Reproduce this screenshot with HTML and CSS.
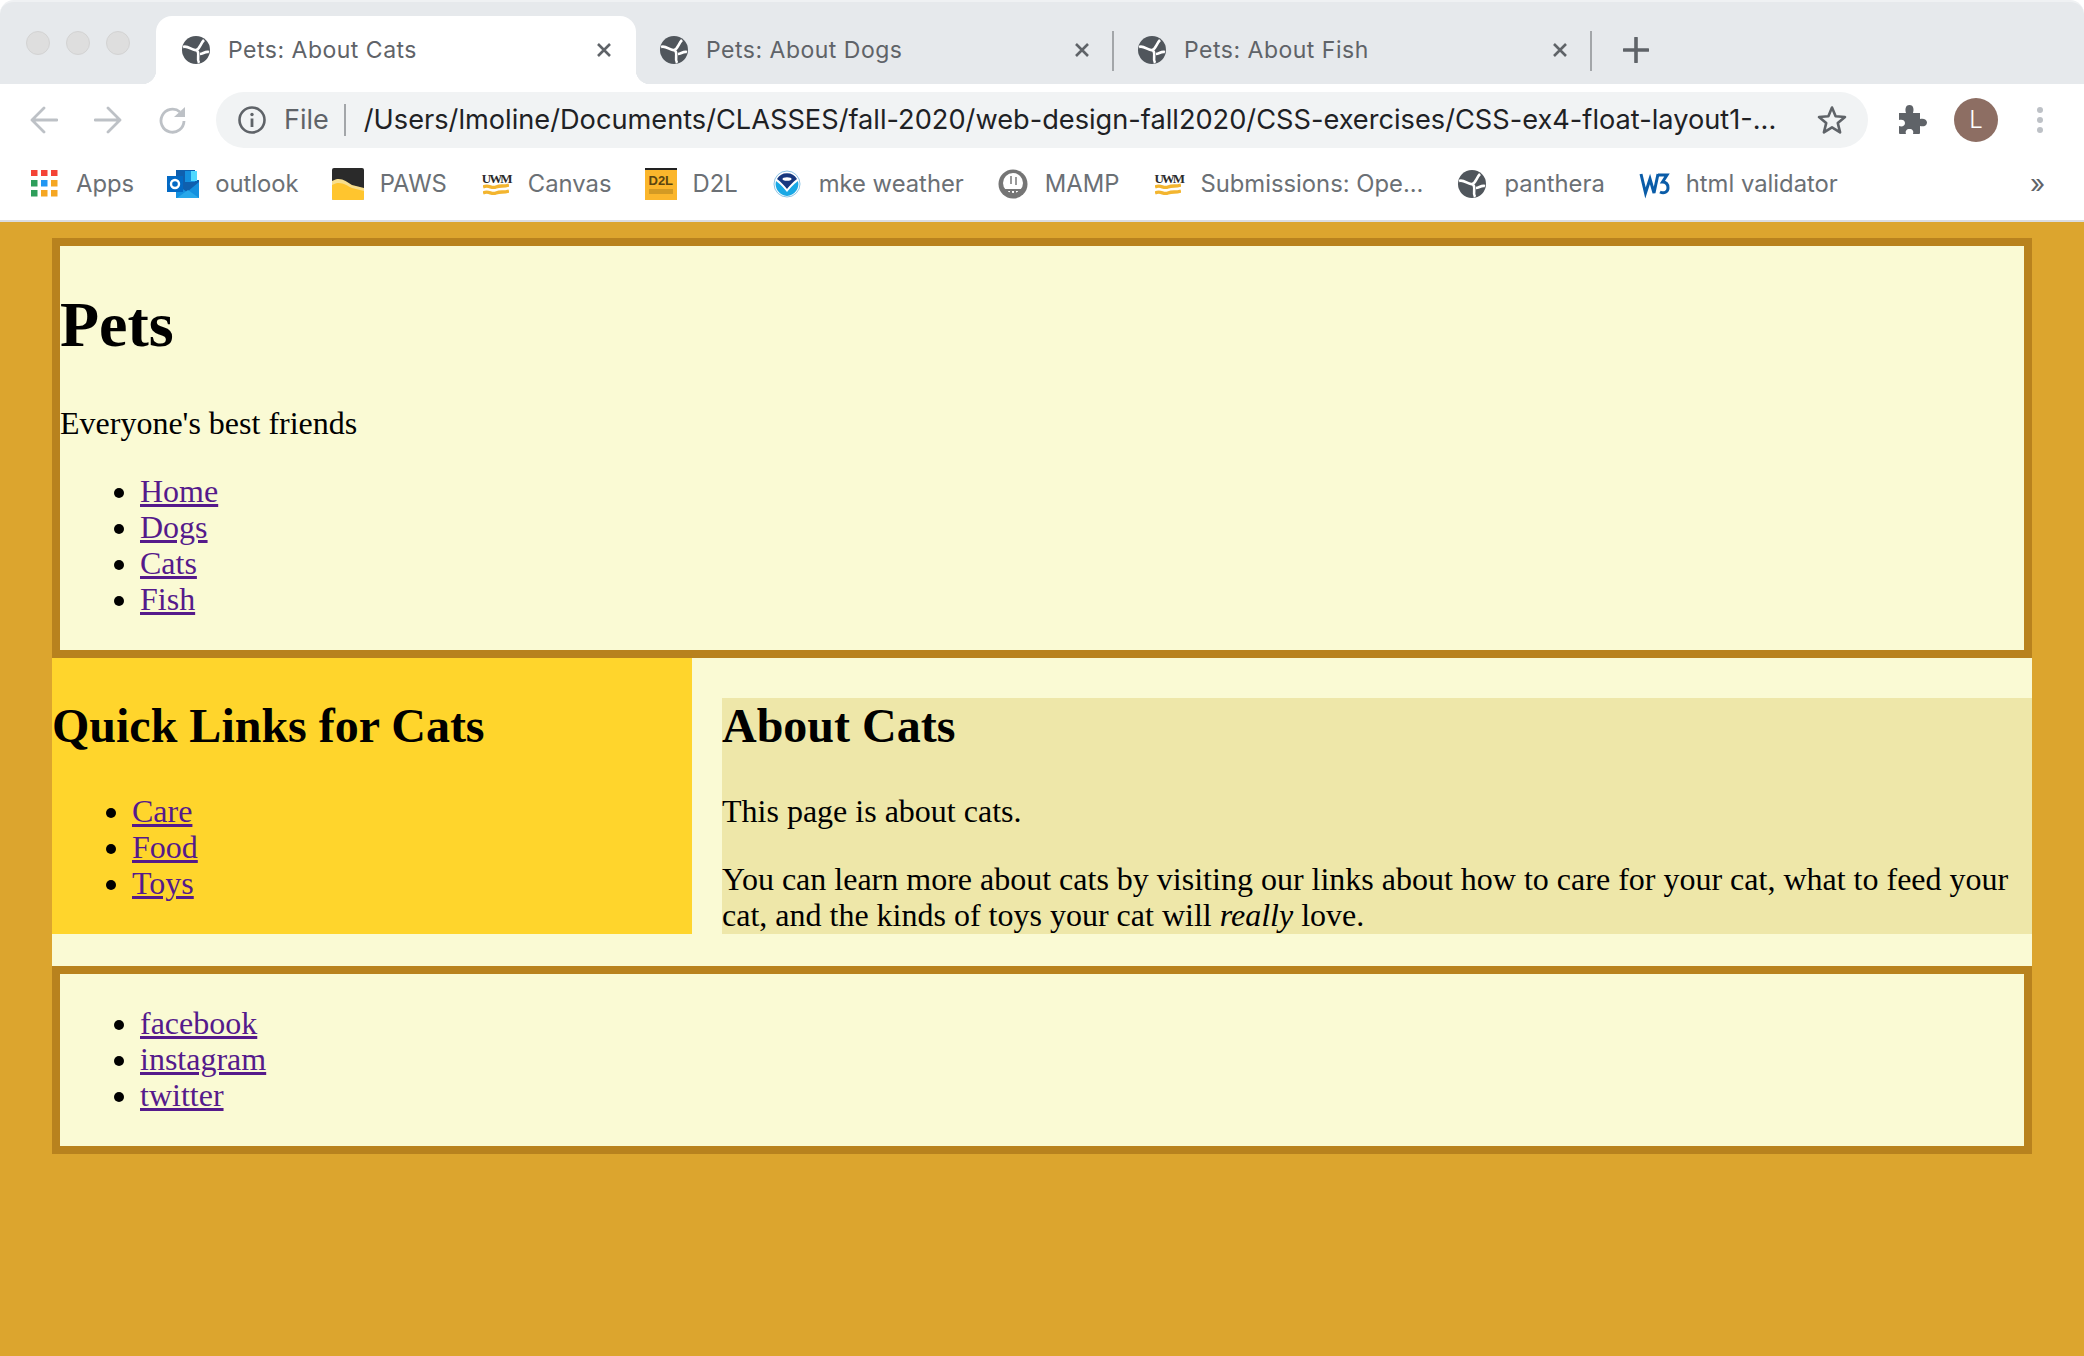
FILE: index.html
```html
<!DOCTYPE html>
<html lang="en">
<head>
<meta charset="utf-8">
<title>Pets: About Cats</title>
<link rel="stylesheet" href="styles.css">
</head>
<body>
<svg class="defs" width="0" height="0" aria-hidden="true">
  <symbol id="globe" viewBox="0 0 28 28">
    <circle cx="14" cy="14" r="14" fill="#50565C"/>
    <path d="M1 11 C6 9 10 15 14 14 C18 13 18 8 22 4 M14 14 C19 16 14 22 17 27 M27 16 C23 15 21 18 18 18" stroke="#fff" stroke-width="2.600" fill="none"/>
  </symbol>
  <symbol id="close" viewBox="0 0 16 16">
    <path d="M2 2 L14 14 M14 2 L2 14" stroke="#5F6368" stroke-width="2.6" fill="none"/>
  </symbol>
  <symbol id="uwm" viewBox="0 0 26 26">
    <path d="M0 16 C6 13 8 18 13 16 C18 14 20 16 26 14 M0 22 C6 19 8 24 13 22 C18 20 20 22 26 20" stroke="#F3B52F" stroke-width="3.4" fill="none"/>
  </symbol>
</svg>

<div class="chrome">
  <div class="tabstrip">
    <div class="lights"><span class="light"></span><span class="light"></span><span class="light"></span></div>
    <div class="tab tab-active">
      <svg class="tab-globe"><use href="#globe"/></svg>
      <span class="tab-title">Pets: About Cats</span>
      <svg class="tab-close"><use href="#close"/></svg>
    </div>
    <div class="tab tab-rest">
      <svg class="tab-globe"><use href="#globe"/></svg>
      <span class="tab-title">Pets: About Dogs</span>
      <svg class="tab-close"><use href="#close"/></svg>
    </div>
    <div class="tab tab-rest">
      <svg class="tab-globe"><use href="#globe"/></svg>
      <span class="tab-title">Pets: About Fish</span>
      <svg class="tab-close"><use href="#close"/></svg>
    </div>
    <svg class="newtab" viewBox="0 0 26 26"><path d="M13 1 V25 M1 13 H25" stroke="#5F6368" stroke-width="3.6" stroke-linecap="round" fill="none"/></svg>
  </div>

  <div class="toolbar">
    <svg class="nav" viewBox="0 0 28 28"><path d="M27 14 H3 M14 2 L2 14 L14 26" stroke="#BDC1C6" stroke-width="2.8" stroke-linecap="round" stroke-linejoin="round" fill="none"/></svg>
    <svg class="nav" viewBox="0 0 28 28"><path d="M1 14 H25 M14 2 L26 14 L14 26" stroke="#BDC1C6" stroke-width="2.8" stroke-linecap="round" stroke-linejoin="round" fill="none"/></svg>
    <svg class="nav" viewBox="0 0 28 28"><path d="M22 6 A11.500 11.500 0 1 0 26 15" stroke="#BDC1C6" stroke-width="2.8" fill="none"/><path d="M27 1 V11 H16 Z" fill="#BDC1C6"/></svg>
    <div class="omnibox">
      <svg class="info" viewBox="0 0 28 28"><circle cx="14" cy="14" r="12.5" stroke="#5F6368" stroke-width="2.6" fill="none"/><path d="M14 12.5 V21" stroke="#5F6368" stroke-width="2.8"/><circle cx="14" cy="8.5" r="1.7" fill="#5F6368"/></svg>
      <span class="scheme">File</span>
      <span class="omni-sep"></span>
      <span class="url">/Users/lmoline/Documents/CLASSES/fall-2020/web-design-fall2020/CSS-exercises/CSS-ex4-float-layout1-...</span>
      <svg class="star" viewBox="0 0 30 30"><path d="M15 2.5 L18.6 11.3 L28 12 L20.8 18.1 L23.1 27.4 L15 22.4 L6.9 27.4 L9.2 18.1 L2 12 L11.4 11.3 Z" stroke="#5F6368" stroke-width="2.6" stroke-linejoin="round" fill="none"/></svg>
    </div>
    <svg class="puzzle" viewBox="0 0 30 30"><path d="M2 8 H9 C8 5 8 0 12.500 0 C17 0 17 5 16 8 H23 V14 C26 13 30 14 30 17.500 C30 21 26 22 23 21 V28 Q23 29 22 29 H16 C17 26 15.500 24 12.500 24 C9.500 24 8 26 9 29 H3 Q2 29 2 28 V21 C5 22 8 21 8 18 C8 15 5 14 2 15 Z" fill="#5F6368"/></svg>
    <div class="avatar">L</div>
    <div class="kebab"><span class="dot"></span><span class="dot"></span><span class="dot"></span></div>
  </div>

  <div class="bookmarks">
    <div class="bm">
      <svg class="bm-icon" viewBox="0 0 32 32">
        <rect x="3" y="2" width="6.500" height="6" fill="#F44336"/><rect x="13" y="2" width="6.500" height="6" fill="#F44336"/><rect x="23" y="2" width="6.500" height="6" fill="#F44336"/>
        <rect x="3" y="12" width="6.500" height="6.500" fill="#2E9E5B"/><rect x="13" y="12" width="6.500" height="6.500" fill="#2196F3"/><rect x="23" y="12" width="6.500" height="6.500" fill="#F5A623"/>
        <rect x="3" y="22" width="6.500" height="6.500" fill="#2E9E5B"/><rect x="13" y="22" width="6.500" height="6.500" fill="#F5A623"/><rect x="23" y="22" width="6.500" height="6.500" fill="#F5A623"/>
      </svg>
      <span>Apps</span>
    </div>
    <div class="bm">
      <svg class="bm-icon" viewBox="0 0 32 32">
        <path d="M9 2 H28 V12 H32 V30 H9 Z" fill="#0F5FAE"/><path d="M18 3 H28 V14 H18 Z" fill="#1490DF"/><path d="M24 3 H30 V13 H24 Z" fill="#50D9FF"/>
        <path d="M9 30 V16 L20 24 L32 14 V30 Z" fill="#1490DF"/><path d="M10 30 L21 22 L32 30 Z" fill="#28A8EA"/>
        <rect x="0" y="8" width="16" height="16" fill="#0369C4"/><circle cx="8" cy="16" r="4" stroke="#fff" stroke-width="2.400" fill="none"/>
      </svg>
      <span>outlook</span>
    </div>
    <div class="bm">
      <svg class="bm-icon" viewBox="0 0 32 32">
        <rect width="32" height="32" rx="2" fill="#2A2A2A"/>
        <path d="M0 13 C8 8 14 13 20 17 L32 20 V30 Q32 32 30 32 H2 Q0 32 0 30 Z" fill="#F8DE8C"/>
        <path d="M0 17 C8 12 14 17 20 20 L32 23 V30 Q32 32 30 32 H2 Q0 32 0 30 Z" fill="#FFC52E"/>
      </svg>
      <span>PAWS</span>
    </div>
    <div class="bm">
      <svg class="bm-icon" viewBox="0 0 32 32">
        <use href="#uwm" x="3" y="3" width="26" height="26"/>
      </svg>
      <span class="uwm-lbl" aria-hidden="true">UWM</span>
      <span>Canvas</span>
    </div>
    <div class="bm">
      <svg class="bm-icon" viewBox="0 0 32 32">
        <rect width="32" height="32" fill="#FBB62C"/><rect width="32" height="2" fill="#222"/><rect x="4" y="21" width="24" height="5" fill="#D39A24"/>
      </svg>
      <span class="d2l-lbl" aria-hidden="true">D2L</span>
      <span>D2L</span>
    </div>
    <div class="bm">
      <svg class="bm-icon" viewBox="0 0 32 32">
        <circle cx="16" cy="16" r="13" fill="#fff" stroke="#8CC4E6" stroke-width="1"/>
        <path d="M5 13 C10 17 13 20 16 24 C19 20 22 17 27 13 A12 12 0 0 1 16 28 A12 12 0 0 1 5 13 Z" fill="#19A8E5"/>
        <path d="M6 11 A11.500 11.500 0 0 1 26 11 C22 14 19 17 16 21 C13 17 10 14 6 11 Z" fill="#17387F"/>
        <ellipse cx="16" cy="11" rx="4.500" ry="1.800" fill="#fff"/>
      </svg>
      <span>mke weather</span>
    </div>
    <div class="bm">
      <svg class="bm-icon" viewBox="0 0 32 32">
        <circle cx="16" cy="16" r="14.500" fill="#757575"/><circle cx="16" cy="15" r="10" fill="#fff"/><path d="M8 21 H24 V27 H21 V23 H19 V27 H17 V23 H15 V27 H13 V23 H11 V27 H8 Z" fill="#757575"/><path d="M13 8 H15 V16 H13 Z M18 9 H20 V17 H18 Z" fill="#9A9A9A"/>
      </svg>
      <span>MAMP</span>
    </div>
    <div class="bm">
      <svg class="bm-icon" viewBox="0 0 32 32">
        <use href="#uwm" x="3" y="3" width="26" height="26"/>
      </svg>
      <span class="uwm-lbl" aria-hidden="true">UWM</span>
      <span>Submissions: Ope...</span>
    </div>
    <div class="bm">
      <svg class="bm-icon"><use href="#globe" x="2" y="2" width="28" height="28"/></svg>
      <span>panthera</span>
    </div>
    <div class="bm">
      <svg class="bm-icon" viewBox="0 0 32 32"><path d="M3 6 L7.500 25 L12 11 L16 25 L20 6" stroke="#0A5CA8" stroke-width="3" fill="none"/><path d="M20 7 H29 L24.500 14 C29 14 30 17 30 20 C30 24 26 26 22 24" stroke="#0A5CA8" stroke-width="3" fill="none"/></svg>
      <span>html validator</span>
    </div>
    <span class="more">»</span>
  </div>
</div>

<main class="page">
  <header class="box header">
    <h1>Pets</h1>
    <p>Everyone's best friends</p>
    <ul>
      <li><a href="#">Home</a></li>
      <li><a href="#">Dogs</a></li>
      <li><a href="#">Cats</a></li>
      <li><a href="#">Fish</a></li>
    </ul>
  </header>
  <div class="columns">
    <aside class="side">
      <h2>Quick Links for Cats</h2>
      <ul>
        <li><a href="#">Care</a></li>
        <li><a href="#">Food</a></li>
        <li><a href="#">Toys</a></li>
      </ul>
    </aside>
    <section class="content">
      <h2>About Cats</h2>
      <p>This page is about cats.</p>
      <p class="last">You can learn more about cats by visiting our links about how to care for your cat, what to feed your cat, and the kinds of toys your cat will <em>really</em> love.</p>
    </section>
  </div>
  <footer class="box footer">
    <ul>
      <li><a href="#">facebook</a></li>
      <li><a href="#">instagram</a></li>
      <li><a href="#">twitter</a></li>
    </ul>
  </footer>
</main>
</body>
</html>
```
FILE: styles.css
```css
* { box-sizing: border-box; }
html, body { margin: 0; padding: 0; }
body {
  width: 2084px;
  height: 1356px;
  overflow: hidden;
  background: #DCA52E;
  font-family: "Liberation Serif", serif;
  font-size: 32px;
  line-height: 36px;
  color: #000;
}
.defs { position: absolute; }

/* Browser chrome */
.chrome {
  height: 222px;
  background: #fff;
  border-bottom: 2px solid #DADCE0;
  font-family: Inter, "Noto Sans", sans-serif;
}
.tabstrip {
  height: 84px;
  display: flex;
  align-items: flex-end;
  background: #E6E9EC;
  border-radius: 14px 14px 0 0;
  border-top: 2px solid #EFF1F3;
}
.lights {
  width: 156px;
  height: 82px;
  display: flex;
  gap: 16px;
  padding: 29px 0 0 26px;
}
.light {
  width: 24px;
  height: 24px;
  border-radius: 50%;
  background: #DEDEDE;
  border: 1px solid #D3D3D3;
}
.tab {
  width: 478px;
  height: 68px;
  display: flex;
  align-items: center;
  padding-left: 24px;
  position: relative;
  color: #5F6368;
}
.tab-active {
  width: 480px;
  padding-left: 26px;
  background: #fff;
  border-radius: 16px 16px 0 0;
}
.tab-active::before,
.tab-active::after {
  content: "";
  position: absolute;
  bottom: 0;
  width: 14px;
  height: 14px;
}
.tab-active::before {
  left: -14px;
  background: radial-gradient(circle at 0 0, transparent 14px, #fff 14.5px);
}
.tab-active::after {
  right: -14px;
  background: radial-gradient(circle at 100% 0, transparent 14px, #fff 14.5px);
}
.tab-rest + .tab-rest::before,
.tab-rest + .tab-rest::after {
  content: "";
  position: absolute;
  top: 15px;
  width: 2px;
  height: 40px;
  background: #A3A6A9;
}
.tab-rest + .tab-rest::before { left: -2px; }
.tab-rest + .tab-rest::after { right: 0; }
.tab-globe { width: 28px; height: 28px; flex: none; }
.tab-title {
  flex: 1;
  margin-left: 18px;
  font-size: 23px;
  line-height: 30px;
  letter-spacing: 0.5px;
  white-space: nowrap;
}
.tab-close { width: 16px; height: 16px; flex: none; margin-right: 24px; }
.newtab { width: 26px; height: 26px; margin: 0 0 21px 31px; }

.toolbar {
  height: 72px;
  padding: 8px 0;
  display: flex;
  align-items: center;
}
.nav { width: 28px; height: 28px; flex: none; margin-left: 36px; }
.nav:first-child { margin-left: 30px; }
.omnibox {
  width: 1652px;
  height: 56px;
  margin-left: 30px;
  flex: none;
  display: flex;
  align-items: center;
  background: #F1F3F4;
  border-radius: 28px;
  padding-left: 22px;
}
.info { width: 28px; height: 28px; flex: none; }
.scheme { margin-left: 18px; font-size: 27px; color: #5F6368; }
.omni-sep { width: 2px; height: 32px; margin-left: 15px; background: #A3A6A9; flex: none; }
.url {
  margin-left: 18px;
  font-size: 27.2px;
  color: #202124;
  white-space: nowrap;
}
.star { width: 30px; height: 30px; flex: none; margin-left: auto; margin-right: 21px; }
.puzzle { width: 30px; height: 30px; flex: none; margin-left: 29px; }
.avatar {
  width: 44px;
  height: 44px;
  flex: none;
  margin-left: 27px;
  border-radius: 50%;
  background: #8D6E63;
  color: #fff;
  font-size: 24px;
  font-weight: 300;
  display: flex;
  align-items: center;
  justify-content: center;
}
.kebab {
  flex: none;
  margin-left: 39px;
  display: flex;
  flex-direction: column;
  gap: 4px;
}
.dot { width: 6px; height: 6px; border-radius: 50%; background: #BDC1C6; }

.bookmarks {
  height: 56px;
  display: flex;
  align-items: center;
  gap: 33px;
  padding-left: 28px;
  position: relative;
  font-size: 23.8px;
  color: #6B7075;
}
.bm { display: flex; align-items: center; gap: 16px; white-space: nowrap; position: relative; }
.bm-icon { width: 32px; height: 32px; flex: none; }
.uwm-lbl {
  position: absolute;
  left: 2px;
  top: 6px;
  font-family: "Liberation Serif", serif;
  font-size: 13px;
  line-height: 14px;
  font-weight: bold;
  color: #2B2B2B;
  letter-spacing: -2px;
}
.d2l-lbl {
  position: absolute;
  left: 4px;
  top: 9px;
  font-family: "Liberation Sans", sans-serif;
  font-size: 13px;
  line-height: 12px;
  font-weight: bold;
  color: #5A4510;
}
.more { position: absolute; left: 2030px; top: 13px; line-height: 30px; font-size: 26px; color: #5F6368; }

/* The page itself */
.page {
  width: 1980px;
  margin: 16px 0 0 52px;
}
.box {
  border: 8px solid #B8821E;
  background: #FAFAD4;
}
.header { height: 420px; padding-top: 42px; }
h1 { margin: 0 0 43px; font-size: 64px; line-height: 74px; }
h2 { margin: 0 0 39px; font-size: 48px; line-height: 56px; }
p { margin: 0 0 32px; }
ul { margin: 32px 0; padding-left: 80px; }
a { color: #551A8B; }

.columns {
  display: flex;
  align-items: flex-start;
  background: #FAFAD4;
  height: 308px;
}
.side {
  width: 640px;
  height: 276px;
  padding-top: 40px;
  background: #FFD52C;
  flex: none;
}
.side ul { margin-bottom: 0; }
.content {
  width: 1310px;
  height: 236px;
  margin: 40px 0 0 30px;
  background: #EEE7A9;
  flex: none;
}
.content p.last { margin-bottom: 0; }
.footer { height: 188px; padding-top: 31px; }
.footer ul { margin: 0; }
```
